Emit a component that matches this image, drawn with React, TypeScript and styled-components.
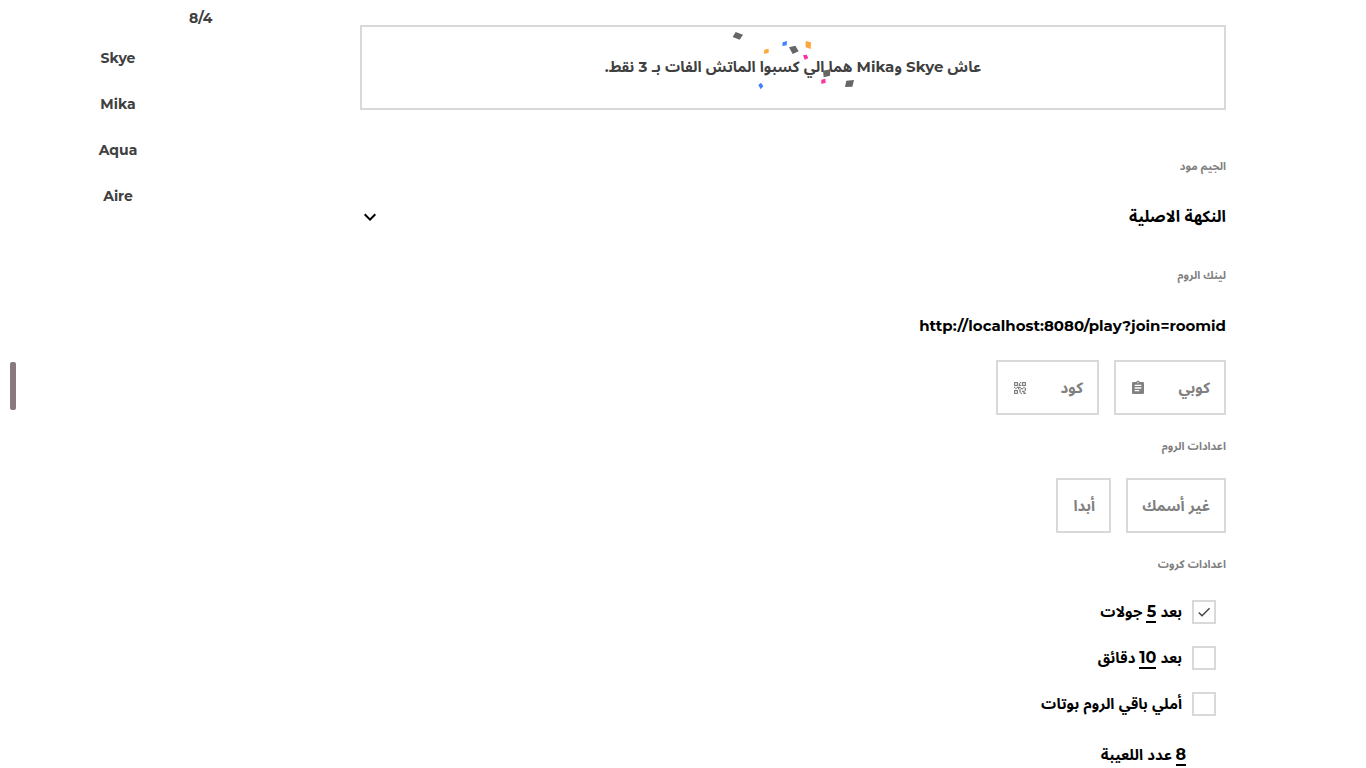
import React from "react";
import styled, { createGlobalStyle } from "styled-components";
import { MdAssignment, MdCheck, MdQrCode2 } from "react-icons/md";

const GlobalStyle = createGlobalStyle`
  * { box-sizing: border-box; }
  body {
    margin: 0;
    background: #fff;
    color: #000;
    font-family: Montserrat, "Noto Sans Arabic", sans-serif;
    font-size: 15px;
    font-weight: 700;
    line-height: 20px;
  }
  button, input, select { font: inherit; color: inherit; }
`;

const Page = styled.div`
  display: flex;
  gap: 124px;
  height: 100vh;
  overflow: hidden;
  padding-right: 140px;
`;

const Lobby = styled.main`
  flex: 1;
  min-width: 0;
  padding-top: 25px;
`;

const Players = styled.aside`
  width: 236px;
  padding-top: 8px;
  color: #404040;
  font-size: 14px;
`;

const Count = styled.p`
  margin: 0;
  padding-left: 189px;
  text-align: left;
  line-height: 20px;
`;

const PlayerList = styled.ul`
  list-style: none;
  margin: 7px 0 0;
  padding: 0;
`;

const Player = styled.li`
  line-height: 46px;
  text-align: center;
`;

const Banner = styled.section`
  position: relative;
  display: flex;
  align-items: center;
  justify-content: center;
  height: 85px;
  margin-bottom: 45px;
  padding-bottom: 2px;
  border: 2px solid #d9d9d9;
  color: #404040;
`;

const Confetti = styled.svg`
  position: absolute;
  top: 3px;
  left: calc(50% - 61px);
`;

const SectionTitle = styled.h2`
  margin: 0;
  color: #808080;
  font-size: 11px;
  font-weight: 700;
  line-height: 20px;
`;

const ModeField = styled.div`
  display: grid;
  align-items: center;
  margin: 21px 0 28px;
  > * { grid-area: 1 / 1; }
  svg { justify-self: end; pointer-events: none; }
`;

const ModeSelect = styled.select`
  appearance: none;
  width: 100%;
  height: 40px;
  padding: 0;
  border: 0;
  background: none;
  font-size: 16px;
`;

const RoomLink = styled.a`
  display: block;
  margin: 31px 0 24px;
  color: #000;
  direction: ltr;
  text-align: right;
  text-decoration: none;
`;

const Actions = styled.div`
  display: flex;
  gap: 15px;
  margin-bottom: 21px;
`;

const SettingActions = styled(Actions)`
  margin-top: 22px;
`;

const ActionButton = styled.button<{ $width: number }>`
  display: flex;
  align-items: center;
  justify-content: space-between;
  min-width: ${(p) => p.$width}px;
  height: 55px;
  padding: 0 14px;
  border: 2px solid #d9d9d9;
  background: #fff;
  color: #808080;
  white-space: nowrap;
`;

const Options = styled.div`
  padding: 15px 10px 0 0;
`;

const OptionRow = styled.div`
  display: flex;
  align-items: center;
  gap: 10px;
  height: 46px;
`;

const OptionText = styled.label`
  display: flex;
  align-items: center;
  gap: 4px;
`;

const PlayerLimit = styled(OptionText)`
  height: 56px;
  padding-right: 30px;
`;

const Tick = styled.span`
  display: grid;
  place-items: center;
  > * { grid-area: 1 / 1; }
  svg { color: #404040; pointer-events: none; visibility: hidden; }
  input:checked + svg { visibility: visible; }
`;

const TickBox = styled.input`
  appearance: none;
  width: 24px;
  height: 24px;
  margin: 0;
  border: 2px solid #d9d9d9;
  background: #fff;
`;

const NumberBox = styled.input<{ $digits: number }>`
  width: ${(p) => (p.$digits > 1 ? 17 : 10)}px;
  height: 22px;
  padding: 0;
  border: 0;
  border-bottom: 2px solid #000;
  background: none;
  font-size: 16px;
  text-align: center;
`;

const SideHandle = styled.button`
  position: fixed;
  top: calc(50% - 22px);
  left: 10px;
  width: 6px;
  height: 48px;
  padding: 0;
  border: 0;
  border-radius: 2px;
  background: #8a7a7e;
`;

const pieces = [
  ["#666", "398,51 407,36 429,44 419,59"],
  ["#666", "567,82 586,77 596,94 578,102"],
  ["#666", "669,152 691,148 690,167 671,172"],
  ["#666", "739,182 762,180 757,200 735,201"],
  ["#4080ff", "548,67 561,63 560,76 547,78"],
  ["#4080ff", "475,195 483,188 490,199 482,208"],
  ["#ffa63a", "617,63 633,67 632,87 617,82"],
  ["#ffa63a", "493,89 506,86 506,98 492,102"],
  ["#ff339f", "609,106 620,104 625,115 614,119"],
  ["#ff339f", "664,179 676,176 677,188 664,192"],
];

const afterOptions = [
  { id: "rounds", value: "5", unit: "جولات", checked: true },
  { id: "minutes", value: "10", unit: "دقائق", checked: false },
];

const TickField = ({ id, checked, label }: { id: string; checked?: boolean; label: string }) => (
  <Tick>
    <TickBox type="checkbox" id={id} defaultChecked={checked} aria-label={label} />
    <MdCheck size={16} />
  </Tick>
);

export default function App() {
  return (
    <>
      <GlobalStyle />
      <Page dir="rtl">
        <Lobby>
          <Banner>
            عاش Skye وMika هما الي كسبوا الماتش الفات بـ 3 نقط.
            <Confetti width="122" height="61" viewBox="396 30 366 183" aria-hidden="true">
              {pieces.map(([fill, points]) => (
                <polygon key={points} fill={fill} points={points} />
              ))}
            </Confetti>
          </Banner>

          <SectionTitle as="label" htmlFor="mode">الجيم مود</SectionTitle>
          <ModeField>
            <ModeSelect id="mode">
              <option>النكهة الاصلية</option>
            </ModeSelect>
            <svg width="20" height="20" viewBox="2 2 20 20" aria-hidden="true">
              <path d="M16.59 8.59 12 13.17 7.41 8.59 6 10l6 6 6-6z" />
            </svg>
          </ModeField>

          <SectionTitle>لينك الروم</SectionTitle>
          <RoomLink href="http://localhost:8080/play?join=roomid">
            http://localhost:8080/play?join=roomid
          </RoomLink>
          <Actions>
            <ActionButton $width={112}>كوبي<MdAssignment size={16} /></ActionButton>
            <ActionButton $width={103}>كود<MdQrCode2 size={16} /></ActionButton>
          </Actions>

          <SectionTitle>اعدادات الروم</SectionTitle>
          <SettingActions>
            <ActionButton $width={100}>غير أسمك</ActionButton>
            <ActionButton $width={55}>أبدا</ActionButton>
          </SettingActions>

          <SectionTitle>اعدادات كروت</SectionTitle>
          <Options>
            {afterOptions.map((o) => (
              <OptionRow key={o.id}>
                <TickField id={o.id} checked={o.checked} label={`بعد ${o.value} ${o.unit}`} />
                <OptionText htmlFor={`${o.id}-value`}>
                  بعد
                  <NumberBox id={`${o.id}-value`} $digits={o.value.length} defaultValue={o.value} />
                  {o.unit}
                </OptionText>
              </OptionRow>
            ))}
            <OptionRow>
              <TickField id="bots" label="أملي باقي الروم بوتات" />
              <OptionText htmlFor="bots">أملي باقي الروم بوتات</OptionText>
            </OptionRow>
            <PlayerLimit htmlFor="limit">
              <NumberBox id="limit" $digits={1} defaultValue="8" />
              عدد اللعيبة
            </PlayerLimit>
          </Options>
        </Lobby>

        <Players>
          <Count dir="ltr">8/4</Count>
          <PlayerList>
            {["Skye", "Mika", "Aqua", "Aire"].map((name) => (
              <Player key={name}>{name}</Player>
            ))}
          </PlayerList>
        </Players>
      </Page>
      <SideHandle aria-label="القائمة" />
    </>
  );
}
